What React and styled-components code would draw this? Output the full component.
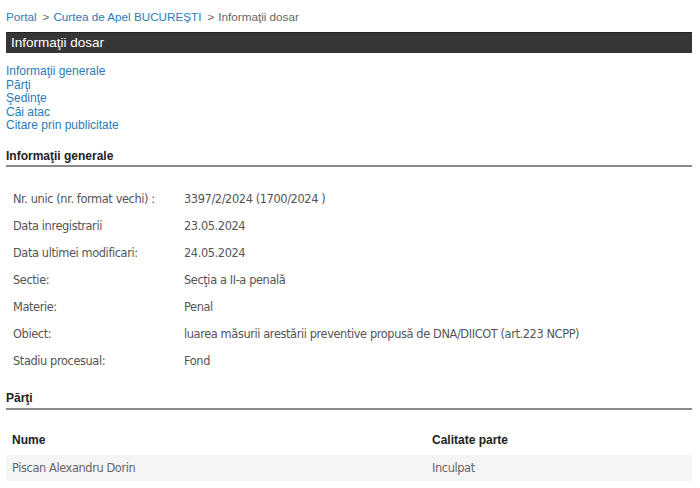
import React from 'react';
import styled, { createGlobalStyle } from 'styled-components';

const GlobalStyle = createGlobalStyle`
  body {
    margin: 0;
    background: #fff;
    font-family: "Liberation Sans", Arial, sans-serif;
  }
`;

const Page = styled.div`
  width: 686px;
  padding: 9px 6px 0;
`;

const Breadcrumb = styled.div`
  font-size: 11.7px;
  color: #666;
  height: 23px;
  line-height: 16px;

  a {
    color: #2b7bb9;
    text-decoration: none;
  }
`;

const Sep = styled.span`
  margin: 0 4px 0 6px;
`;

const TitleBar = styled.div`
  background: #363636;
  border-top: 1px solid #222;
  color: #fff;
  font-size: 13.5px;
  height: 20px;
  line-height: 20px;
  padding-left: 5px;
`;

const NavList = styled.div`
  display: flex;
  flex-direction: column;
  padding-top: 12px;
  font-size: 12px;
  line-height: 13.5px;

  a {
    color: #2b7bb9;
    text-decoration: none;
  }
`;

const SectionTitle = styled.div`
  margin-top: ${p => p.$top}px;
  font-size: 12px;
  font-weight: bold;
  color: #222;
  padding-bottom: ${p => p.$pad}px;
  border-bottom: 2px solid #8a8a8a;
`;

const InfoTable = styled.div`
  display: grid;
  grid-template-columns: 171px 1fr;
  grid-auto-rows: 27px;
  padding: 19px 0 0 7px;
  font-family: "DejaVu Sans", Tahoma, sans-serif;
  font-size: 11.4px;
  color: #555;
  letter-spacing: -0.4px;

  span {
    line-height: 27px;
  }
`;

const PartyHead = styled.div`
  display: grid;
  grid-template-columns: 420px 1fr;
  padding: 23px 0 0 6px;
  height: 22px;
  font-size: 12px;
  font-weight: bold;
  color: #222;
`;

const PartyRow = styled.div`
  display: grid;
  grid-template-columns: 420px 1fr;
  padding-left: 6px;
  background: #f5f5f5;
  height: 26px;
  line-height: 26px;
  font-family: "DejaVu Sans", Tahoma, sans-serif;
  font-size: 11.4px;
  color: #666;
  letter-spacing: -0.4px;
`;

const info = [
  ['Nr. unic (nr. format vechi) :', '3397/2/2024 (1700/2024 )'],
  ['Data inregistrarii', '23.05.2024'],
  ['Data ultimei modificari:', '24.05.2024'],
  ['Sectie:', 'Secţia a II-a penală'],
  ['Materie:', 'Penal'],
  ['Obiect:', 'luarea măsurii arestării preventive propusă de DNA/DIICOT (art.223 NCPP)'],
  ['Stadiu procesual:', 'Fond'],
];

const links = ['Informaţii generale', 'Părţi', 'Şedinţe', 'Căi atac', 'Citare prin publicitate'];

export default function App() {
  return (
    <>
      <GlobalStyle />
      <Page>
        <Breadcrumb>
          <a href="#">Portal</a>
          <Sep>&gt;</Sep>
          <a href="#">Curtea de Apel BUCUREŞTI</a>
          <Sep>&gt;</Sep>
          Informaţii dosar
        </Breadcrumb>
        <TitleBar>Informaţii dosar</TitleBar>
        <NavList>
          {links.map(l => (
            <a key={l} href="#">{l}</a>
          ))}
        </NavList>
        <SectionTitle $top={16} $pad={2}>Informaţii generale</SectionTitle>
        <InfoTable>
          {info.map(([k, v]) => (
            <React.Fragment key={k}>
              <span>{k}</span>
              <span>{v}</span>
            </React.Fragment>
          ))}
        </InfoTable>
        <SectionTitle $top={16} $pad={3}>Părţi</SectionTitle>
        <PartyHead>
          <span>Nume</span>
          <span>Calitate parte</span>
        </PartyHead>
        <PartyRow>
          <span>Piscan Alexandru Dorin</span>
          <span>Inculpat</span>
        </PartyRow>
      </Page>
    </>
  );
}
